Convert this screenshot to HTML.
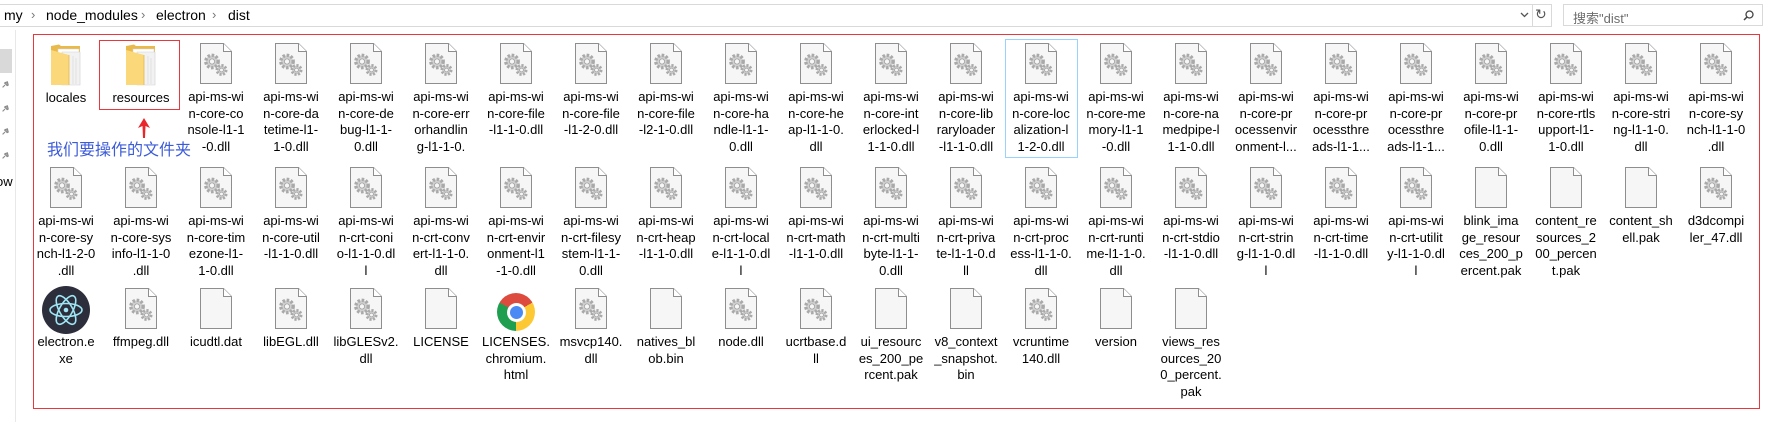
<!DOCTYPE html>
<html><head><meta charset="utf-8">
<style>
*{margin:0;padding:0;box-sizing:border-box}
body{width:1770px;height:422px;background:#fff;position:relative;overflow:hidden;font-family:"Liberation Sans","Noto Sans CJK SC",sans-serif;color:#000}
.c{position:absolute;width:74px;text-align:center;font-size:13px;line-height:16.7px}
.c .i{height:46px;display:flex;justify-content:center;align-items:flex-start}
.c .i svg{display:block}
.addr{position:absolute;left:-2px;top:4px;width:1554px;height:23px;border:1px solid #d9d9d9}
.bc{position:absolute;top:7px;font-size:14px;color:#000}
.sep{position:absolute;top:7px;font-size:13px;color:#777}
.search{position:absolute;left:1563px;top:4px;width:200px;height:22px;border:1px solid #d9d9d9;font-size:13px;color:#6d6d6d;padding:3px 0 0 9px}
.red{position:absolute;left:33px;top:34px;width:1727px;height:375px;border:1px solid #e8383d}
.pin{position:absolute;left:0;width:10px;height:8px}
</style></head><body>
<svg width="0" height="0" style="position:absolute">
<defs>
<symbol id="blank" viewBox="0 0 32 41"><path d="M0.5 0.5H23.5L31.5 8.5V40.5H0.5Z" fill="#f6f6f6" stroke="#8e8e8e"/><path d="M23.5 0.5V8.5H31.5" fill="#fff" stroke="#8e8e8e"/></symbol>
<symbol id="gear" viewBox="0 0 32 41"><path d="M0.5 0.5H23.5L31.5 8.5V40.5H0.5Z" fill="#f6f6f6" stroke="#8e8e8e"/><path d="M23.5 0.5V8.5H31.5" fill="#fff" stroke="#8e8e8e"/>
<circle cx="12" cy="18.5" r="6.2" fill="#d0d0d0" stroke="#a9a9a9" stroke-width="3.4" stroke-dasharray="2.4 1.7"/><circle cx="12" cy="18.5" r="2.6" fill="#f6f6f6" stroke="#a0a0a0" stroke-width=".8"/>
<circle cx="21.5" cy="27" r="4.5" fill="#d0d0d0" stroke="#a9a9a9" stroke-width="3" stroke-dasharray="2 1.5"/><circle cx="21.5" cy="27" r="1.9" fill="#f6f6f6" stroke="#a0a0a0" stroke-width=".8"/></symbol>
<symbol id="folder" viewBox="0 0 32 42"><path d="M1 2 L9 0.5 L11 2 H30 V41 H1Z" fill="#e9b94a"/><path d="M8 5 H29 V40 H8Z" fill="#fff" stroke="#d8d8d8" stroke-width=".6"/><path d="M12 8 H30 V41 H12Z" fill="#f2f2f2" stroke="#cfcfcf" stroke-width=".6"/><path d="M1 6 L19 11 V41 H1Z" fill="#fbd97a"/><path d="M19 11 V41" stroke="#e2b652" stroke-width=".8"/><path d="M23 12 V40 M26 14 V40" stroke="#d5d5d5" stroke-width=".6"/></symbol>
<symbol id="pin" viewBox="0 0 10 10"><path d="M2 8 L5 5 M4 2 L8 6 M5 2 L8 1 L9 5 L8 6" stroke="#8a8a8a" stroke-width="1.4" fill="#aaa"/></symbol>
</defs></svg>

<div class="addr"></div>
<div class="bc" style="left:4px">my</div>
<div class="sep" style="left:31px">›</div>
<div class="bc" style="left:46px">node_modules</div>
<div class="sep" style="left:141px">›</div>
<div class="bc" style="left:156px">electron</div>
<div class="sep" style="left:212px">›</div>
<div class="bc" style="left:228px">dist</div>
<svg style="position:absolute;left:1520px;top:12px" width="9" height="6"><path d="M1 1 L4.5 4.5 L8 1" stroke="#555" stroke-width="1.3" fill="none"/></svg>
<div style="position:absolute;left:1532px;top:4px;width:1px;height:23px;background:#d9d9d9"></div>
<div style="position:absolute;left:1535px;top:6px;font-size:14px;color:#555">↻</div>
<div class="search">搜索"dist"<svg style="position:absolute;right:8px;top:5px" width="11" height="11"><circle cx="6.5" cy="4.5" r="3.5" stroke="#444" stroke-width="1.3" fill="none"/><path d="M4 7 L1 10" stroke="#444" stroke-width="1.5"/></svg></div>

<div style="position:absolute;left:15px;top:30px;width:1px;height:392px;background:#e8e8e8"></div>
<div style="position:absolute;left:0;top:49px;width:12px;height:24px;background:#d9d9d9"></div>
<svg class="pin" style="top:81px" viewBox="0 0 10 10"><use href="#pin"/></svg>
<svg class="pin" style="top:105px" viewBox="0 0 10 10"><use href="#pin"/></svg>
<svg class="pin" style="top:128px" viewBox="0 0 10 10"><use href="#pin"/></svg>
<svg class="pin" style="top:152px" viewBox="0 0 10 10"><use href="#pin"/></svg>
<div style="position:absolute;left:-4px;top:174px;font-size:13px">ow</div>

<div class="red"></div>
<div style="position:absolute;left:99px;top:40px;width:81px;height:70px;border:1px solid #e8383d"></div>
<div style="position:absolute;left:1005px;top:39px;width:73px;height:119px;border:1px solid #99d1ff"></div>
<svg style="position:absolute;left:137px;top:117px" width="14" height="22"><path d="M7 1 L13 11 L8.5 9 L8 21 L6 21 L5.5 9 L1 11Z" fill="#e8262b"/></svg>
<div style="position:absolute;left:47px;top:138px;font-size:16px;color:#3c5bd9;font-family:'Noto Sans CJK SC',sans-serif;line-height:20px">我们要操作的文件夹</div>

<div class="c" style="left:29px;top:44px"><div class="i"><svg width="32" height="42"><use href="#folder"/></svg></div>locales</div>
<div class="c" style="left:104px;top:44px"><div class="i"><svg width="32" height="42"><use href="#folder"/></svg></div>resources</div>
<div class="c" style="left:179px;top:43px"><div class="i"><svg width="32" height="41"><use href="#gear"/></svg></div>api-ms-wi<br>n-core-co<br>nsole-l1-1<br>-0.dll</div>
<div class="c" style="left:254px;top:43px"><div class="i"><svg width="32" height="41"><use href="#gear"/></svg></div>api-ms-wi<br>n-core-da<br>tetime-l1-<br>1-0.dll</div>
<div class="c" style="left:329px;top:43px"><div class="i"><svg width="32" height="41"><use href="#gear"/></svg></div>api-ms-wi<br>n-core-de<br>bug-l1-1-<br>0.dll</div>
<div class="c" style="left:404px;top:43px"><div class="i"><svg width="32" height="41"><use href="#gear"/></svg></div>api-ms-wi<br>n-core-err<br>orhandlin<br>g-l1-1-0.</div>
<div class="c" style="left:479px;top:43px"><div class="i"><svg width="32" height="41"><use href="#gear"/></svg></div>api-ms-wi<br>n-core-file<br>-l1-1-0.dll</div>
<div class="c" style="left:554px;top:43px"><div class="i"><svg width="32" height="41"><use href="#gear"/></svg></div>api-ms-wi<br>n-core-file<br>-l1-2-0.dll</div>
<div class="c" style="left:629px;top:43px"><div class="i"><svg width="32" height="41"><use href="#gear"/></svg></div>api-ms-wi<br>n-core-file<br>-l2-1-0.dll</div>
<div class="c" style="left:704px;top:43px"><div class="i"><svg width="32" height="41"><use href="#gear"/></svg></div>api-ms-wi<br>n-core-ha<br>ndle-l1-1-<br>0.dll</div>
<div class="c" style="left:779px;top:43px"><div class="i"><svg width="32" height="41"><use href="#gear"/></svg></div>api-ms-wi<br>n-core-he<br>ap-l1-1-0.<br>dll</div>
<div class="c" style="left:854px;top:43px"><div class="i"><svg width="32" height="41"><use href="#gear"/></svg></div>api-ms-wi<br>n-core-int<br>erlocked-l<br>1-1-0.dll</div>
<div class="c" style="left:929px;top:43px"><div class="i"><svg width="32" height="41"><use href="#gear"/></svg></div>api-ms-wi<br>n-core-lib<br>raryloader<br>-l1-1-0.dll</div>
<div class="c" style="left:1004px;top:43px"><div class="i"><svg width="32" height="41"><use href="#gear"/></svg></div>api-ms-wi<br>n-core-loc<br>alization-l<br>1-2-0.dll</div>
<div class="c" style="left:1079px;top:43px"><div class="i"><svg width="32" height="41"><use href="#gear"/></svg></div>api-ms-wi<br>n-core-me<br>mory-l1-1<br>-0.dll</div>
<div class="c" style="left:1154px;top:43px"><div class="i"><svg width="32" height="41"><use href="#gear"/></svg></div>api-ms-wi<br>n-core-na<br>medpipe-l<br>1-1-0.dll</div>
<div class="c" style="left:1229px;top:43px"><div class="i"><svg width="32" height="41"><use href="#gear"/></svg></div>api-ms-wi<br>n-core-pr<br>ocessenvir<br>onment-l...</div>
<div class="c" style="left:1304px;top:43px"><div class="i"><svg width="32" height="41"><use href="#gear"/></svg></div>api-ms-wi<br>n-core-pr<br>ocessthre<br>ads-l1-1...</div>
<div class="c" style="left:1379px;top:43px"><div class="i"><svg width="32" height="41"><use href="#gear"/></svg></div>api-ms-wi<br>n-core-pr<br>ocessthre<br>ads-l1-1...</div>
<div class="c" style="left:1454px;top:43px"><div class="i"><svg width="32" height="41"><use href="#gear"/></svg></div>api-ms-wi<br>n-core-pr<br>ofile-l1-1-<br>0.dll</div>
<div class="c" style="left:1529px;top:43px"><div class="i"><svg width="32" height="41"><use href="#gear"/></svg></div>api-ms-wi<br>n-core-rtls<br>upport-l1-<br>1-0.dll</div>
<div class="c" style="left:1604px;top:43px"><div class="i"><svg width="32" height="41"><use href="#gear"/></svg></div>api-ms-wi<br>n-core-stri<br>ng-l1-1-0.<br>dll</div>
<div class="c" style="left:1679px;top:43px"><div class="i"><svg width="32" height="41"><use href="#gear"/></svg></div>api-ms-wi<br>n-core-sy<br>nch-l1-1-0<br>.dll</div>

<div class="c" style="left:29px;top:167px"><div class="i"><svg width="32" height="41"><use href="#gear"/></svg></div>api-ms-wi<br>n-core-sy<br>nch-l1-2-0<br>.dll</div>
<div class="c" style="left:104px;top:167px"><div class="i"><svg width="32" height="41"><use href="#gear"/></svg></div>api-ms-wi<br>n-core-sys<br>info-l1-1-0<br>.dll</div>
<div class="c" style="left:179px;top:167px"><div class="i"><svg width="32" height="41"><use href="#gear"/></svg></div>api-ms-wi<br>n-core-tim<br>ezone-l1-<br>1-0.dll</div>
<div class="c" style="left:254px;top:167px"><div class="i"><svg width="32" height="41"><use href="#gear"/></svg></div>api-ms-wi<br>n-core-util<br>-l1-1-0.dll</div>
<div class="c" style="left:329px;top:167px"><div class="i"><svg width="32" height="41"><use href="#gear"/></svg></div>api-ms-wi<br>n-crt-coni<br>o-l1-1-0.dl<br>l</div>
<div class="c" style="left:404px;top:167px"><div class="i"><svg width="32" height="41"><use href="#gear"/></svg></div>api-ms-wi<br>n-crt-conv<br>ert-l1-1-0.<br>dll</div>
<div class="c" style="left:479px;top:167px"><div class="i"><svg width="32" height="41"><use href="#gear"/></svg></div>api-ms-wi<br>n-crt-envir<br>onment-l1<br>-1-0.dll</div>
<div class="c" style="left:554px;top:167px"><div class="i"><svg width="32" height="41"><use href="#gear"/></svg></div>api-ms-wi<br>n-crt-filesy<br>stem-l1-1-<br>0.dll</div>
<div class="c" style="left:629px;top:167px"><div class="i"><svg width="32" height="41"><use href="#gear"/></svg></div>api-ms-wi<br>n-crt-heap<br>-l1-1-0.dll</div>
<div class="c" style="left:704px;top:167px"><div class="i"><svg width="32" height="41"><use href="#gear"/></svg></div>api-ms-wi<br>n-crt-local<br>e-l1-1-0.dl<br>l</div>
<div class="c" style="left:779px;top:167px"><div class="i"><svg width="32" height="41"><use href="#gear"/></svg></div>api-ms-wi<br>n-crt-math<br>-l1-1-0.dll</div>
<div class="c" style="left:854px;top:167px"><div class="i"><svg width="32" height="41"><use href="#gear"/></svg></div>api-ms-wi<br>n-crt-multi<br>byte-l1-1-<br>0.dll</div>
<div class="c" style="left:929px;top:167px"><div class="i"><svg width="32" height="41"><use href="#gear"/></svg></div>api-ms-wi<br>n-crt-priva<br>te-l1-1-0.d<br>ll</div>
<div class="c" style="left:1004px;top:167px"><div class="i"><svg width="32" height="41"><use href="#gear"/></svg></div>api-ms-wi<br>n-crt-proc<br>ess-l1-1-0.<br>dll</div>
<div class="c" style="left:1079px;top:167px"><div class="i"><svg width="32" height="41"><use href="#gear"/></svg></div>api-ms-wi<br>n-crt-runti<br>me-l1-1-0.<br>dll</div>
<div class="c" style="left:1154px;top:167px"><div class="i"><svg width="32" height="41"><use href="#gear"/></svg></div>api-ms-wi<br>n-crt-stdio<br>-l1-1-0.dll</div>
<div class="c" style="left:1229px;top:167px"><div class="i"><svg width="32" height="41"><use href="#gear"/></svg></div>api-ms-wi<br>n-crt-strin<br>g-l1-1-0.dl<br>l</div>
<div class="c" style="left:1304px;top:167px"><div class="i"><svg width="32" height="41"><use href="#gear"/></svg></div>api-ms-wi<br>n-crt-time<br>-l1-1-0.dll</div>
<div class="c" style="left:1379px;top:167px"><div class="i"><svg width="32" height="41"><use href="#gear"/></svg></div>api-ms-wi<br>n-crt-utilit<br>y-l1-1-0.dl<br>l</div>
<div class="c" style="left:1454px;top:167px"><div class="i"><svg width="32" height="41"><use href="#blank"/></svg></div>blink_ima<br>ge_resour<br>ces_200_p<br>ercent.pak</div>
<div class="c" style="left:1529px;top:167px"><div class="i"><svg width="32" height="41"><use href="#blank"/></svg></div>content_re<br>sources_2<br>00_percen<br>t.pak</div>
<div class="c" style="left:1604px;top:167px"><div class="i"><svg width="32" height="41"><use href="#blank"/></svg></div>content_sh<br>ell.pak</div>
<div class="c" style="left:1679px;top:167px"><div class="i"><svg width="32" height="41"><use href="#gear"/></svg></div>d3dcompi<br>ler_47.dll</div>

<div class="c" style="left:29px;top:286px"><div class="i" style="height:48px"><svg width="48" height="48" viewBox="0 0 48 48"><circle cx="24" cy="24" r="24" fill="#2c2f3b"/><g fill="none" stroke="#9ee6f5" stroke-width="1.6"><ellipse cx="24" cy="24" rx="16" ry="6.5"/><ellipse cx="24" cy="24" rx="16" ry="6.5" transform="rotate(60 24 24)"/><ellipse cx="24" cy="24" rx="16" ry="6.5" transform="rotate(120 24 24)"/></g><circle cx="24" cy="24" r="2.3" fill="#9ee6f5"/></svg></div>electron.e<br>xe</div>
<div class="c" style="left:104px;top:288px"><div class="i"><svg width="32" height="41"><use href="#gear"/></svg></div>ffmpeg.dll</div>
<div class="c" style="left:179px;top:288px"><div class="i"><svg width="32" height="41"><use href="#blank"/></svg></div>icudtl.dat</div>
<div class="c" style="left:254px;top:288px"><div class="i"><svg width="32" height="41"><use href="#gear"/></svg></div>libEGL.dll</div>
<div class="c" style="left:329px;top:288px"><div class="i"><svg width="32" height="41"><use href="#gear"/></svg></div>libGLESv2.<br>dll</div>
<div class="c" style="left:404px;top:288px"><div class="i"><svg width="32" height="41"><use href="#blank"/></svg></div>LICENSE</div>
<div class="c" style="left:479px;top:288px"><div class="i"><div style="margin-top:5px;width:44px;height:38px;display:flex;justify-content:center"><div style="width:38px;height:38px;border-radius:50%;background:conic-gradient(from -60deg,#dd4b3e 0 120deg,#fcc934 120deg 240deg,#1e9e4f 240deg 360deg);position:relative"><div style="position:absolute;left:9.5px;top:9.5px;width:19px;height:19px;border-radius:50%;background:#fff"></div><div style="position:absolute;left:12.5px;top:12.5px;width:13px;height:13px;border-radius:50%;background:#4a8af4"></div></div></div></div>LICENSES.<br>chromium.<br>html</div>
<div class="c" style="left:554px;top:288px"><div class="i"><svg width="32" height="41"><use href="#gear"/></svg></div>msvcp140.<br>dll</div>
<div class="c" style="left:629px;top:288px"><div class="i"><svg width="32" height="41"><use href="#blank"/></svg></div>natives_bl<br>ob.bin</div>
<div class="c" style="left:704px;top:288px"><div class="i"><svg width="32" height="41"><use href="#gear"/></svg></div>node.dll</div>
<div class="c" style="left:779px;top:288px"><div class="i"><svg width="32" height="41"><use href="#gear"/></svg></div>ucrtbase.d<br>ll</div>
<div class="c" style="left:854px;top:288px"><div class="i"><svg width="32" height="41"><use href="#blank"/></svg></div>ui_resourc<br>es_200_pe<br>rcent.pak</div>
<div class="c" style="left:929px;top:288px"><div class="i"><svg width="32" height="41"><use href="#blank"/></svg></div>v8_context<br>_snapshot.<br>bin</div>
<div class="c" style="left:1004px;top:288px"><div class="i"><svg width="32" height="41"><use href="#gear"/></svg></div>vcruntime<br>140.dll</div>
<div class="c" style="left:1079px;top:288px"><div class="i"><svg width="32" height="41"><use href="#blank"/></svg></div>version</div>
<div class="c" style="left:1154px;top:288px"><div class="i"><svg width="32" height="41"><use href="#blank"/></svg></div>views_res<br>ources_20<br>0_percent.<br>pak</div>
</body></html>
